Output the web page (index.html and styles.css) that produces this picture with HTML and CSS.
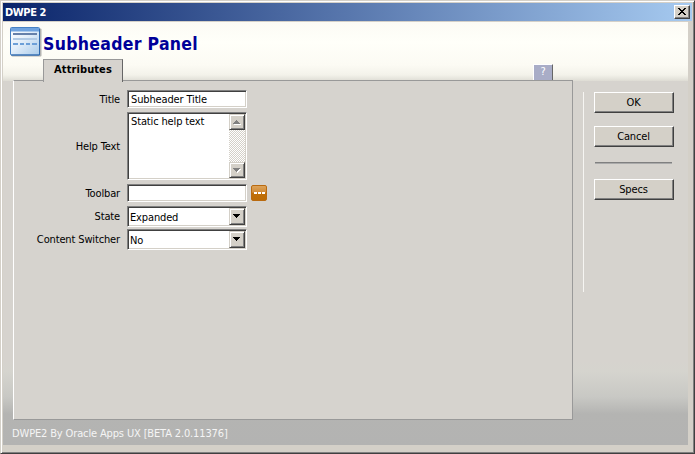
FILE: index.html
```html
<!DOCTYPE html>
<html lang="en">
<head>
<meta charset="utf-8">
<title>DWPE 2</title>
<link rel="stylesheet" href="styles.css">
</head>
<body>
<div class="window">
  <div class="titlebar">
    <span class="caption">DWPE 2</span>
    <button class="close" aria-label="Close"><svg width="10" height="8" viewBox="0 0 10 8" shape-rendering="crispEdges"><path d="M1 0h2v1h1v1h2v-1h1v-1h2v1h-1v1h-1v1h-1v1h1v1h1v1h1v1h-2v-1h-1v-1h-2v1h-1v1h-2v-1h1v-1h1v-1h1v-1h-1v-1h-1v-1h-1z"/></svg></button>
  </div>
  <div class="content">
    <header class="header">
      <div class="heading">
        <svg class="logo" width="32" height="30" viewBox="0 0 32 30">
          <defs><linearGradient id="paper" x1="0" y1="0" x2="1" y2="1"><stop offset="0" stop-color="#fff"/><stop offset=".45" stop-color="#e3eef9"/><stop offset="1" stop-color="#a9cbea"/></linearGradient></defs>
          <rect x="1.500" y="1.500" width="30" height="28" rx="1" fill="#777" opacity=".55"/>
          <rect x=".5" y=".5" width="29" height="27.500" rx="1" fill="url(#paper)" stroke="#4681c4"/>
          <path d="M1 1h28v3.500H1z" fill="#6fa3df"/>
          <path d="M29.500 2v26H1" fill="none" stroke="#2f69ad"/>
          <path d="M3 6h24v2H3z" fill="#6580aa"/>
          <path d="M3 11h24v2H3z" fill="#b1cae5"/>
          <path d="M3 16h5v2H3zM10 16h4v2h-4zM16 16h4v2h-4zM22 16h5v2h-5z" fill="#6c9fd8"/>
        </svg>
        <h1>Subheader Panel</h1>
      </div>
      <div class="tabs"><div class="tab"><span>Attributes</span></div><div class="help">?</div></div>
    </header>
    <main class="body">
      <section class="panel">
        <div class="form">
          <label class="title-label"><span>Title</span></label>
          <div class="field text"><span>Subheader Title</span></div>
          <label class="help-label"><span>Help Text</span></label>
          <div class="field area"><span class="area-text">Static help text</span>
            <div class="scroll">
              <i class="sb"><svg width="8" height="5" viewBox="0 0 8 5" shape-rendering="crispEdges"><path fill="#fff" d="M1 4h7v1H1z"/><path fill="#808080" d="M3 0h1v1h1v1h1v1h1v1H0V3h1V2h1V1h1z"/></svg></i>
              <i class="sb"><svg width="8" height="5" viewBox="0 0 8 5" shape-rendering="crispEdges"><path fill="#fff" d="M7 1h1v1H7v1H6v1H5v1H4V3z"/><path fill="#808080" d="M0 0h7v1H6v1H5v1H4v1H3V3H2V2H1V1H0z"/></svg></i>
            </div>
          </div>
          <label class="toolbar-label"><span>Toolbar</span></label>
          <div class="with-more"><div class="field text"></div><button class="more" aria-label="Edit toolbar"><i></i><i></i><i></i></button></div>
          <label class="state-label"><span>State</span></label>
          <div class="field select"><span class="expanded">Expanded</span><i class="sb"><svg width="7" height="4" viewBox="0 0 7 4" shape-rendering="crispEdges"><path d="M0 0h7v1H6v1H5v1H4v1H3V3H2V2H1V1H0z"/></svg></i></div>
          <label class="switch-label"><span>Content Switcher</span></label>
          <div class="field select"><span>No</span><i class="sb"><svg width="7" height="4" viewBox="0 0 7 4" shape-rendering="crispEdges"><path d="M0 0h7v1H6v1H5v1H4v1H3V3H2V2H1V1H0z"/></svg></i></div>
        </div>
      </section>
      <aside class="actions">
        <button class="btn ok">OK</button>
        <button class="btn">Cancel</button>
        <div class="rule"></div>
        <button class="btn">Specs</button>
      </aside>
    </main>
    <footer class="footer"><span>DWPE2 By Oracle Apps UX [BETA 2.0.11376]</span></footer>
  </div>
</div>
</body>
</html>
```
FILE: styles.css
```css
* { box-sizing: border-box; }
body {
  margin: 0;
  font: 11px/14px "DejaVu Sans Condensed", "DejaVu Sans", sans-serif;
  font-stretch: condensed;
  letter-spacing: -0.14px;
  color: #000;
  white-space: nowrap;
}
button { font: inherit; letter-spacing: inherit; color: inherit; padding: 0; margin: 0; }
svg { display: block; }
.window {
  width: 695px;
  height: 454px;
  background: #d4d0c8;
  border: 1px solid #d4d0c8;
  border-right-color: #404040;
  border-bottom-color: #404040;
  box-shadow: inset 1px 1px #fff, inset -1px -1px #808080;
  padding: 2px;
}
.titlebar {
  height: 18px;
  width: 689px;
  background: linear-gradient(90deg, #0a246a, #a6caf0);
  display: flex;
  align-items: center;
  justify-content: space-between;
  padding: 0 2px 0 2px;
}
.caption { color: #fff; font-weight: bold; letter-spacing: -0.4px; padding-top: 1px; }
.close {
  width: 16px;
  height: 14px;
  background: #d4d0c8;
  border: 1px solid;
  border-color: #fff #404040 #404040 #fff;
  box-shadow: inset -1px -1px #808080;
  display: flex;
  align-items: center;
  justify-content: center;
}
.content {
  width: 685px;
  height: 423px;
  margin-top: 1px;
  background: linear-gradient(#d6d3ce 0, #d6d3ce 338px, #d5d4ce 350px, #c8c8c4 375px, #b4b4b2 392px, #b3b3b2 100%);
}
.header {
  height: 59px;
  display: flex;
  flex-direction: column;
  background: linear-gradient(#fcfbf5 0, #fffff9 20px, #fcfbf4 43px, #f3f2ea 53px, #dedcd4 100%);
}
.heading { display: flex; height: 37px; padding: 5px 0 0 7px; }
.heading h1 {
  margin: 6px 0 0 1px;
  font-size: 17.5px;
  line-height: 23px;
  color: #000099;
  letter-spacing: 0.3px;
}
.tabs { height: 22px; display: flex; align-items: flex-end; padding-left: 40px; }
.tab {
  width: 80px;
  height: 23px;
  background: #d6d3ce;
  border: 1px solid #999;
  border-right-color: #666;
  border-bottom: 0;
  font-weight: bold;
  text-align: center;
  line-height: 20px;
  letter-spacing: 0.1px;
  margin-bottom: -1px;
  position: relative;
}
.help {
  width: 20px;
  height: 17px;
  margin-left: 410px;
  background: #a9adc7;
  border: 1px solid #fff;
  border-right-color: #666;
  border-bottom: 0;
  color: #fff;
  text-align: center;
  line-height: 14px;
}
.body { display: flex; height: 339px; padding-left: 10px; margin-top: -1px; }
.panel {
  width: 560px;
  height: 340px;
  background: #d6d3ce;
  border: 1px solid #999;
  border-left-color: #fff;
  padding-top: 9px;
}
.form {
  display: grid;
  grid-template-columns: 106px 150px;
  column-gap: 7px;
  grid-template-rows: 18px 68px 18px 21px 21px;
  row-gap: 4px;
}
.form label { display: flex; align-items: center; justify-content: flex-end; padding-top: 1px; }
.form .switch-label, .form .switch-label + .field { margin-top: -2px; height: 21px; }
.field {
  width: 120px;
  background: #fff;
  border: 1px solid;
  border-color: #808080 #fff #fff #808080;
  box-shadow: inset 1px 1px #404040, inset -1px -1px #d4d0c8;
}
.text { height: 18px; padding: 2px 0 0 3px; }
.area { height: 68px; padding: 1px 1px 1px 3px; display: flex; justify-content: space-between; }
.area-text { padding-top: 1px; }
.scroll {
  width: 16px;
  display: flex;
  flex-direction: column;
  justify-content: space-between;
  background: repeating-conic-gradient(#fff 0 25%, #d4d0c8 0 50%) 0 0 / 2px 2px;
}
.sb {
  width: 16px;
  height: 16px;
  background: #d4d0c8;
  border: 1px solid;
  border-color: #d4d0c8 #404040 #404040 #d4d0c8;
  box-shadow: inset 1px 1px #fff, inset -1px -1px #808080;
  display: flex;
  align-items: center;
  justify-content: center;
}
.with-more { display: flex; gap: 4px; align-items: center; }
.more {
  width: 16px;
  height: 16px;
  border: 1px solid #b96a10;
  border-radius: 2px;
  background: linear-gradient(#dda35a, #d08a35 45%, #c06f08 50%, #bd6c05);
  display: flex;
  gap: 1px;
  align-items: center;
  justify-content: center;
}
.more i { width: 3px; height: 2px; background: #fff; }
.select { height: 21px; padding: 1px 1px 1px 2px; display: flex; justify-content: space-between; }
.select span { padding-top: 3px; }
.select .sb { height: 17px; padding: 0 1px 1px 0; }
.actions {
  width: 91px;
  height: 200px;
  margin: 12px 0 0 10px;
  border-left: 1px solid #f6f5f2;
  padding-left: 10px;
}
.btn {
  display: block;
  width: 80px;
  height: 21px;
  margin-bottom: 13px;
  padding-right: 1px;
  background: #d4d0c8;
  border: 1px solid;
  border-color: #fff #404040 #404040 #fff;
  box-shadow: inset -1px -1px #808080;
  line-height: 17px;
}
.rule {
  width: 77px;
  height: 2px;
  margin: 15px 0 15px 1px;
  border-top: 1px solid #808080;
  border-bottom: 1px solid #aaa;
}
.footer { color: #f5f5f5; padding: 8px 0 0 9px; }
```
